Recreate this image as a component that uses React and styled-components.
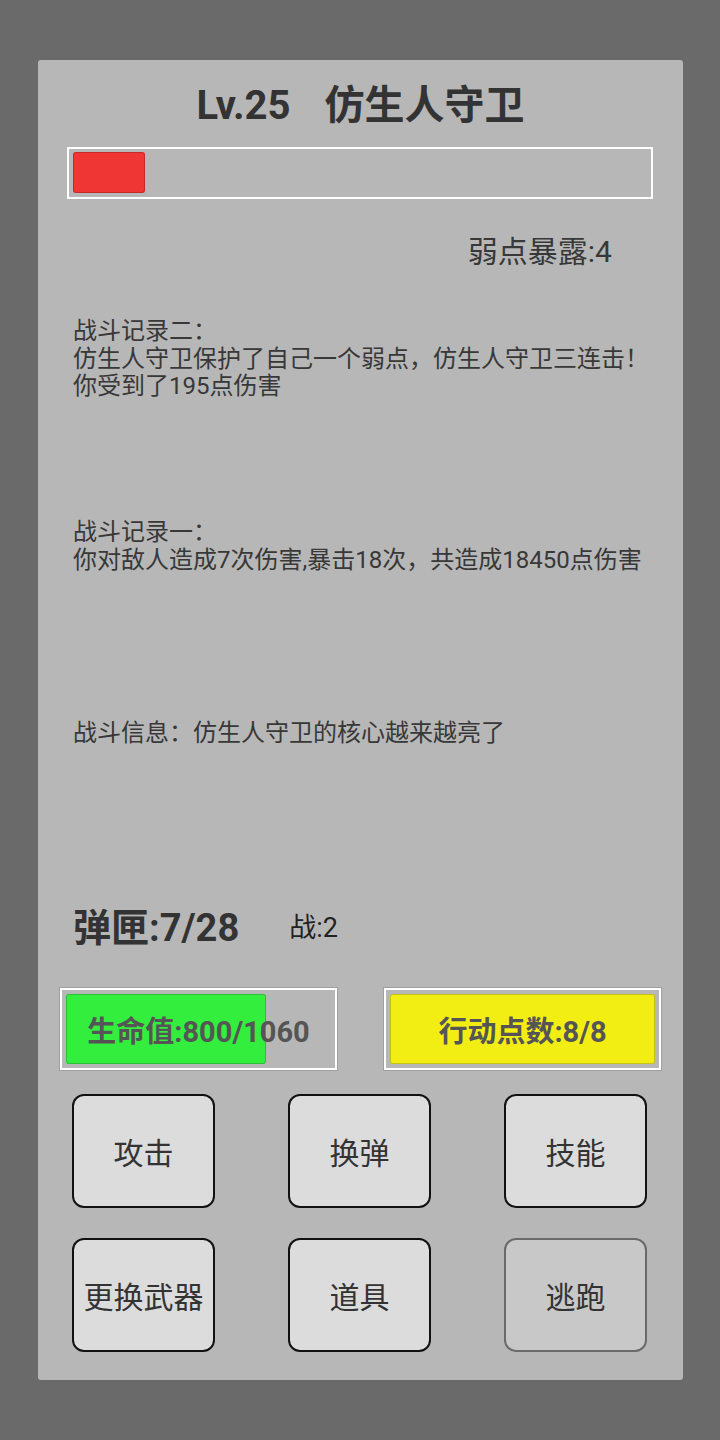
import styled, { createGlobalStyle } from 'styled-components';

const GlobalStyle = createGlobalStyle`
  html, body {
    margin: 0;
    padding: 0;
    background: #6a6a6a;
  }
  body {
    font-family: Roboto, "Noto Sans CJK SC", "Noto Sans", sans-serif;
    color: #333;
  }
`

const logs = [
  { title: '战斗记录二：', lines: ['仿生人守卫保护了自己一个弱点，仿生人守卫三连击！', '你受到了195点伤害'] },
  { title: '战斗记录一：', lines: ['你对敌人造成7次伤害,暴击18次，共造成18450点伤害'] },
  { title: '战斗信息：仿生人守卫的核心越来越亮了', lines: [] },
];

const actions = [
  { label: '攻击' },
  { label: '换弹' },
  { label: '技能' },
  { label: '更换武器' },
  { label: '道具' },
  { label: '逃跑', disabled: true },
];

function App() {
  const bossHp = 0.125;
  const playerHp = 800 / 1060;
  return (
    <Page>
      <GlobalStyle />
      <Panel>
        <Title>
          <span>Lv.25</span>
          <span>仿生人守卫</span>
        </Title>
        <BossBar>
          <BossFill style={{ width: `${bossHp * 100}%` }} />
        </BossBar>
        <WeakRow>弱点暴露:4</WeakRow>
        <LogArea>
          {logs.map((log, i) => (
            <LogEntry key={i}>
              <p>{log.title}</p>
              {log.lines.map((l, j) => <p key={j}>{l}</p>)}
            </LogEntry>
          ))}
        </LogArea>
        <AmmoRow>
          <Ammo>弹匣:7/28</Ammo>
          <Round>战:2</Round>
        </AmmoRow>
        <StatRow>
          <StatBox>
            <StatFill color="#33ee3d" style={{ width: `${playerHp * 100}%` }} />
            <StatLabel>生命值:800/1060</StatLabel>
          </StatBox>
          <StatBox>
            <StatFill color="#f2ee14" style={{ width: '100%' }} />
            <StatLabel>行动点数:8/8</StatLabel>
          </StatBox>
        </StatRow>
        <ButtonGrid>
          {actions.map((a) => (
            <ActionButton key={a.label} disabled={a.disabled} $disabled={a.disabled}>
              {a.label}
            </ActionButton>
          ))}
        </ButtonGrid>
      </Panel>
    </Page>
  );
}

export default App;

const Page = styled.div`
  width: 720px;
  height: 1440px;
  padding: 60px 0 0 38px;
  box-sizing: border-box;
`
const Panel = styled.div`
  width: 645px;
  height: 1320px;
  box-sizing: border-box;
  padding: 24px 0 0 0;
  background: #b7b7b7;
  border-radius: 3px;
  display: flex;
  flex-direction: column;
`
const Title = styled.h1`
  margin: 0;
  height: 44px;
  line-height: 44px;
  font-size: 40px;
  font-weight: 700;
  color: #333;
  display: flex;
  justify-content: center;
  gap: 34px;
`
const BossBar = styled.div`
  margin: 19px 0 0 29px;
  width: 586px;
  height: 52px;
  box-sizing: border-box;
  border: 2px solid #fff;
  padding: 3px 4px;
  display: flex;
`
const BossFill = styled.div`
  height: 41px;
  background: #f03535;
  border-radius: 3px;
  box-shadow: inset 0 0 0 1px rgba(120, 20, 20, 0.35);
`
const WeakRow = styled.div`
  margin: 37px 71px 0 0;
  height: 32px;
  line-height: 32px;
  font-size: 30px;
  text-align: right;
  color: #383838;
`
const LogArea = styled.div`
  margin: 50px 0 0 35px;
  height: 587px;
  display: flex;
  flex-direction: column;
`
const LogEntry = styled.div`
  height: 201px;
  flex-shrink: 0;
  p {
    margin: 0;
    font-size: 24px;
    line-height: 27.5px;
    color: #383838;
    white-space: nowrap;
  }
  &:last-child {
    height: auto;
  }
`
const AmmoRow = styled.div`
  margin: 0 0 0 35px;
  height: 46px;
  display: flex;
  align-items: center;
  gap: 50px;
`
const Ammo = styled.div`
  font-size: 38px;
  font-weight: 700;
  line-height: 46px;
  color: #333;
`
const Round = styled.div`
  font-size: 27px;
  line-height: 46px;
  color: #222;
`
const StatRow = styled.div`
  margin: 37px 0 0 22px;
  display: flex;
  gap: 47px;
`
const StatBox = styled.div`
  position: relative;
  width: 277px;
  height: 82px;
  box-sizing: border-box;
  border: 2px solid #fff;
  box-shadow: 0 0 0 1px rgba(0, 0, 0, 0.12);
  padding: 4px;
  display: flex;
`
const StatFill = styled.div`
  height: 100%;
  background: ${({ color }) => color};
  border-radius: 3px;
  box-shadow: inset 0 0 0 1px rgba(0, 0, 0, 0.18);
`
const StatLabel = styled.div`
  position: absolute;
  inset: 0;
  display: flex;
  align-items: center;
  justify-content: center;
  font-size: 29px;
  font-weight: 700;
  color: #555;
`
const ButtonGrid = styled.div`
  margin: 24px 0 0 34px;
  display: grid;
  grid-template-columns: repeat(3, 143px);
  grid-auto-rows: 114px;
  column-gap: 73px;
  row-gap: 30px;
`
const ActionButton = styled.button`
  box-sizing: border-box;
  background: ${({ $disabled }) => ($disabled ? '#c8c8c8' : '#dcdcdc')};
  border: 2px solid ${({ $disabled }) => ($disabled ? '#6a6a6a' : '#111')};
  border-radius: 12px;
  font-family: Roboto, "Noto Sans CJK SC", sans-serif;
  font-size: 30px;
  color: #333;
  padding: 0;
  display: flex;
  align-items: center;
  justify-content: center;
`
